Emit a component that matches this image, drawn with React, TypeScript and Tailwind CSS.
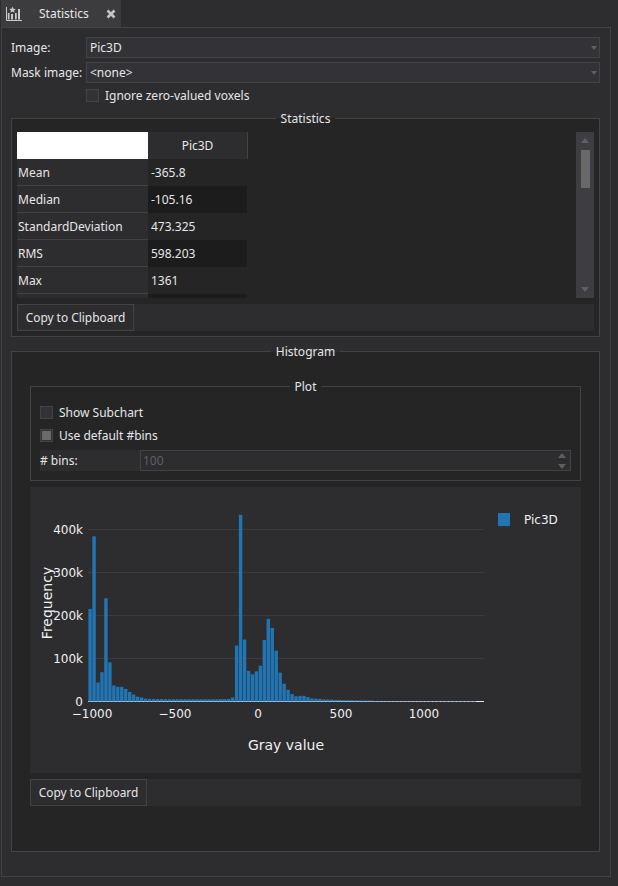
import type { ReactNode } from "react"

const font = { fontFamily: '"Noto Sans", sans-serif' }

// histogram counts in thousands, read bin by bin; the tail sits on the axis line
const bins = [
  214, 383, 43, 67, 239, 90, 36, 33, 33, 28, 21, 15, 10, 8, 5.5, 5, 4.5, 4.5, 4.5, 4, 4, 4, 4, 4, 4, 4, 4, 4, 4, 4, 4, 4,
  4, 4.5, 4.5, 5, 8, 129, 433, 143, 70, 62, 69, 82, 142, 191, 170, 117, 66, 40, 26, 16, 11, 12, 12, 9, 6, 5.5, 5, 3.5, 3.5,
  3.5, 2.5, 2.5, 2, 2, 2, 1.5, 1.5, 1, 1, 1,
  ...Array.from({ length: 26 }, () => 0),
]

const yTicks = [
  { label: "400k", y: 41.5 },
  { label: "300k", y: 84.5 },
  { label: "200k", y: 127.5 },
  { label: "100k", y: 170.5 },
]

const xTicks = [
  { label: "\u22121000", x: 62 },
  { label: "\u2212500", x: 145 },
  { label: "0", x: 228 },
  { label: "500", x: 311 },
  { label: "1000", x: 394 },
]

const rows = [
  ["Mean", "-365.8"],
  ["Median", "-105.16"],
  ["StandardDeviation", "473.325"],
  ["RMS", "598.203"],
  ["Max", "1361"],
  ["", ""],
]

function Arrow({ up = false, small = false, className = "" }: { up?: boolean; small?: boolean; className?: string }) {
  return (
    <svg width={small ? 6 : 8} height={small ? 4 : 5} viewBox="0 0 8 5" preserveAspectRatio="none" className={className}>
      <path d={up ? "M4 0 8 5H0Z" : "M0 0H8L4 5Z"} fill="#5f5f63" />
    </svg>
  )
}

function Combo({ value, className = "" }: { value: string; className?: string }) {
  return (
    <div className={`flex h-[21px] w-[514px] items-center justify-between border border-[#434346] bg-[#333337] pl-[3px] pr-[2px] ${className}`}>
      <span>{value}</span>
      <Arrow small />
    </div>
  )
}

function Check({ label, checked = false, className = "" }: { label: string; checked?: boolean; className?: string }) {
  return (
    <div className={`flex h-[13px] items-center gap-[6px] ${className}`}>
      <div className="flex h-[13px] w-[13px] items-center justify-center border border-[#434346] bg-[#333337]">
        {checked && <div className="h-[9px] w-[9px] bg-[#6a6a6a]" />}
      </div>
      <span>{label}</span>
    </div>
  )
}

function Group({
  title,
  titleBg,
  className = "",
  children,
}: {
  title: string
  titleBg: string
  className?: string
  children: ReactNode
}) {
  return (
    <div className={`relative border border-[#434346] ${className}`}>
      <div className="absolute left-0 right-0 top-[-9px] flex justify-center">
        <span className={`h-[17px] px-[5px] leading-[17px] ${titleBg}`}>{title}</span>
      </div>
      {children}
    </div>
  )
}

function CopyBar({ className = "" }: { className?: string }) {
  return (
    <div className={`h-[27px] bg-[#2d2d30] ${className}`}>
      <button className="h-[27px] w-[117px] border border-[#434346] text-center text-[11.9px]">Copy to Clipboard</button>
    </div>
  )
}

function StatsTable() {
  return (
    <div className="h-[166px] w-[231px] overflow-hidden">
      <div className="flex h-[27px]">
        <div className="w-[131px] bg-white" />
        <div className="flex w-[100px] items-center justify-center border-r border-[#434346] bg-[#2d2d30]">Pic3D</div>
      </div>
      {rows.map(([name, value], i) => (
        <div key={i} className="flex h-[27px]">
          <div className="w-[131px] border-b border-[#434346] bg-[#2d2d30] pl-[1px] leading-[28px]">{name}</div>
          <div className={`w-[99px] pl-[3px] leading-[28px] ${i % 2 === 0 ? "bg-[#252526]" : "bg-[#1c1c1c]"}`}>{value}</div>
        </div>
      ))}
    </div>
  )
}

function Histogram() {
  const chart = { fontFamily: '"DejaVu Sans", sans-serif' }
  return (
    <svg width="551" height="286" viewBox="0 -1 551 286" className="block bg-[#2d2d30]" style={chart}>
      {yTicks.map((t) => (
        <g key={t.label}>
          <line x1="58" x2="454" y1={t.y} y2={t.y} stroke="#3b3b3e" strokeWidth="1" />
          <text x="53" y={t.y + 4.5} textAnchor="end" fontSize="12" fill="#f0f0f0">
            {t.label}
          </text>
        </g>
      ))}
      <text x="53" y="217.5" textAnchor="end" fontSize="12" fill="#f0f0f0">
        0
      </text>
      <line x1="58" x2="454" y1="213.5" y2="213.5" stroke="#e6e6e6" strokeWidth="1" />
      {bins.map((v, i) => {
        const h = v * 0.43
        return <rect key={i} x={58.4 + i * 3.96} y={213 - h} width="3.4" height={h + 1} fill="#2275b3" />
      })}
      <line x1="58" x2="454" y1="213.5" y2="213.5" stroke="#e6e6e6" strokeWidth="1" opacity="0.5" />
      {xTicks.map((t) => (
        <text key={t.label} x={t.x} y="230" textAnchor="middle" fontSize="12" fill="#f0f0f0">
          {t.label}
        </text>
      ))}
      <text x="256" y="262" textAnchor="middle" fontSize="14" fill="#f0f0f0">
        Gray value
      </text>
      <text transform="translate(22 115) rotate(-90)" textAnchor="middle" fontSize="14" fill="#f0f0f0">
        Frequency
      </text>
      <rect x="468" y="25" width="12" height="13" fill="#2275b3" />
      <text x="494" y="36" fontSize="12" fill="#f0f0f0">
        Pic3D
      </text>
    </svg>
  )
}

export default function App() {
  return (
    <div className="h-[886px] w-[618px] overflow-hidden bg-[#2d2d30] text-[12px] text-[#e6e6e6]" style={font}>
      {/* tab strip */}
      <div className="flex h-[27px] pl-[1px]">
        <div className="flex w-[120px] items-center bg-[#3c3c3f]">
          <svg width="18" height="18" viewBox="0 0 18 18" className="ml-[4px]" fill="#c8c8c8">
            <path d="M1.500 2v13.500H17" fill="none" stroke="#c8c8c8" />
            <path d="M2.800 8h1.700v6.500H2.800ZM6 9h2v5.500H6ZM10 8h1.700v6.500H10ZM13 4h2v10.500h-2Z" />
            <path d="m7.500 1.500 1 2.300 2.300.2-1.700 1.500.5 2.300-2.100-1.200-2.100 1.200.5-2.300L4.200 4l2.300-.2Z" />
          </svg>
          <span className="ml-[16px]">Statistics</span>
          <svg width="10" height="10" viewBox="0 0 10 10" className="ml-[17px]">
            <path d="M1.500 1.500l7 7M8.500 1.500l-7 7" stroke="#c4c4c4" strokeWidth="2.600" />
          </svg>
        </div>
      </div>

      <div className="ml-[1px] h-[850px] w-[610px] border border-[#434346] pl-[9px] pt-[9px]">
        <div className="flex items-center">
          <span className="w-[75px]">Image:</span>
          <Combo value="Pic3D" />
        </div>
        <div className="mt-[4px] flex items-center">
          <span className="w-[75px]">Mask image:</span>
          <Combo value="<none>" />
        </div>
        <Check label="Ignore zero-valued voxels" className="ml-[75px] mt-[6px]" />

        <Group
          title="Statistics"
          titleBg="bg-linear-to-b from-[#2d2d30] from-50% to-[#252526] to-50%"
          className="mt-[16px] h-[219px] w-[589px] bg-[#252526] px-[5px] pt-[13px]"
        >
          <div className="flex h-[166px] justify-between">
            <StatsTable />
            <div className="flex w-[18px] flex-col items-center bg-[#3e3e42]">
              <Arrow up className="mt-[6px]" />
              <div className="mt-[7px] h-[38px] w-[9px] bg-[#686868]" />
              <Arrow className="mt-auto mb-[6px]" />
            </div>
          </div>
          <CopyBar className="mt-[6px]" />
        </Group>

        <Group
          title="Histogram"
          titleBg="bg-linear-to-b from-[#2d2d30] from-50% to-[#252526] to-50%"
          className="mt-[14px] h-[501px] w-[589px] bg-[#252526] px-[18px] pt-[34px]"
        >
          <Group title="Plot" titleBg="bg-[#252526]" className="h-[95px] px-[9px] pt-[19px]">
            <Check label="Show Subchart" />
            <Check label="Use default #bins" checked className="mt-[10px]" />
            <div className="mt-[8px] flex h-[21px] bg-[#2d2d30]">
              <span className="w-[100px] leading-[21px]"># bins:</span>
              <div className="flex flex-1 items-center justify-between border border-[#434346] pl-[2px] pr-[4px] text-[#5f5f63]">
                <span>100</span>
                <div className="flex flex-col gap-[6px]">
                  <Arrow up />
                  <Arrow />
                </div>
              </div>
            </div>
          </Group>
          <div className="mt-[6px]">
            <Histogram />
          </div>
          <CopyBar className="mt-[6px]" />
        </Group>
      </div>
    </div>
  )
}
